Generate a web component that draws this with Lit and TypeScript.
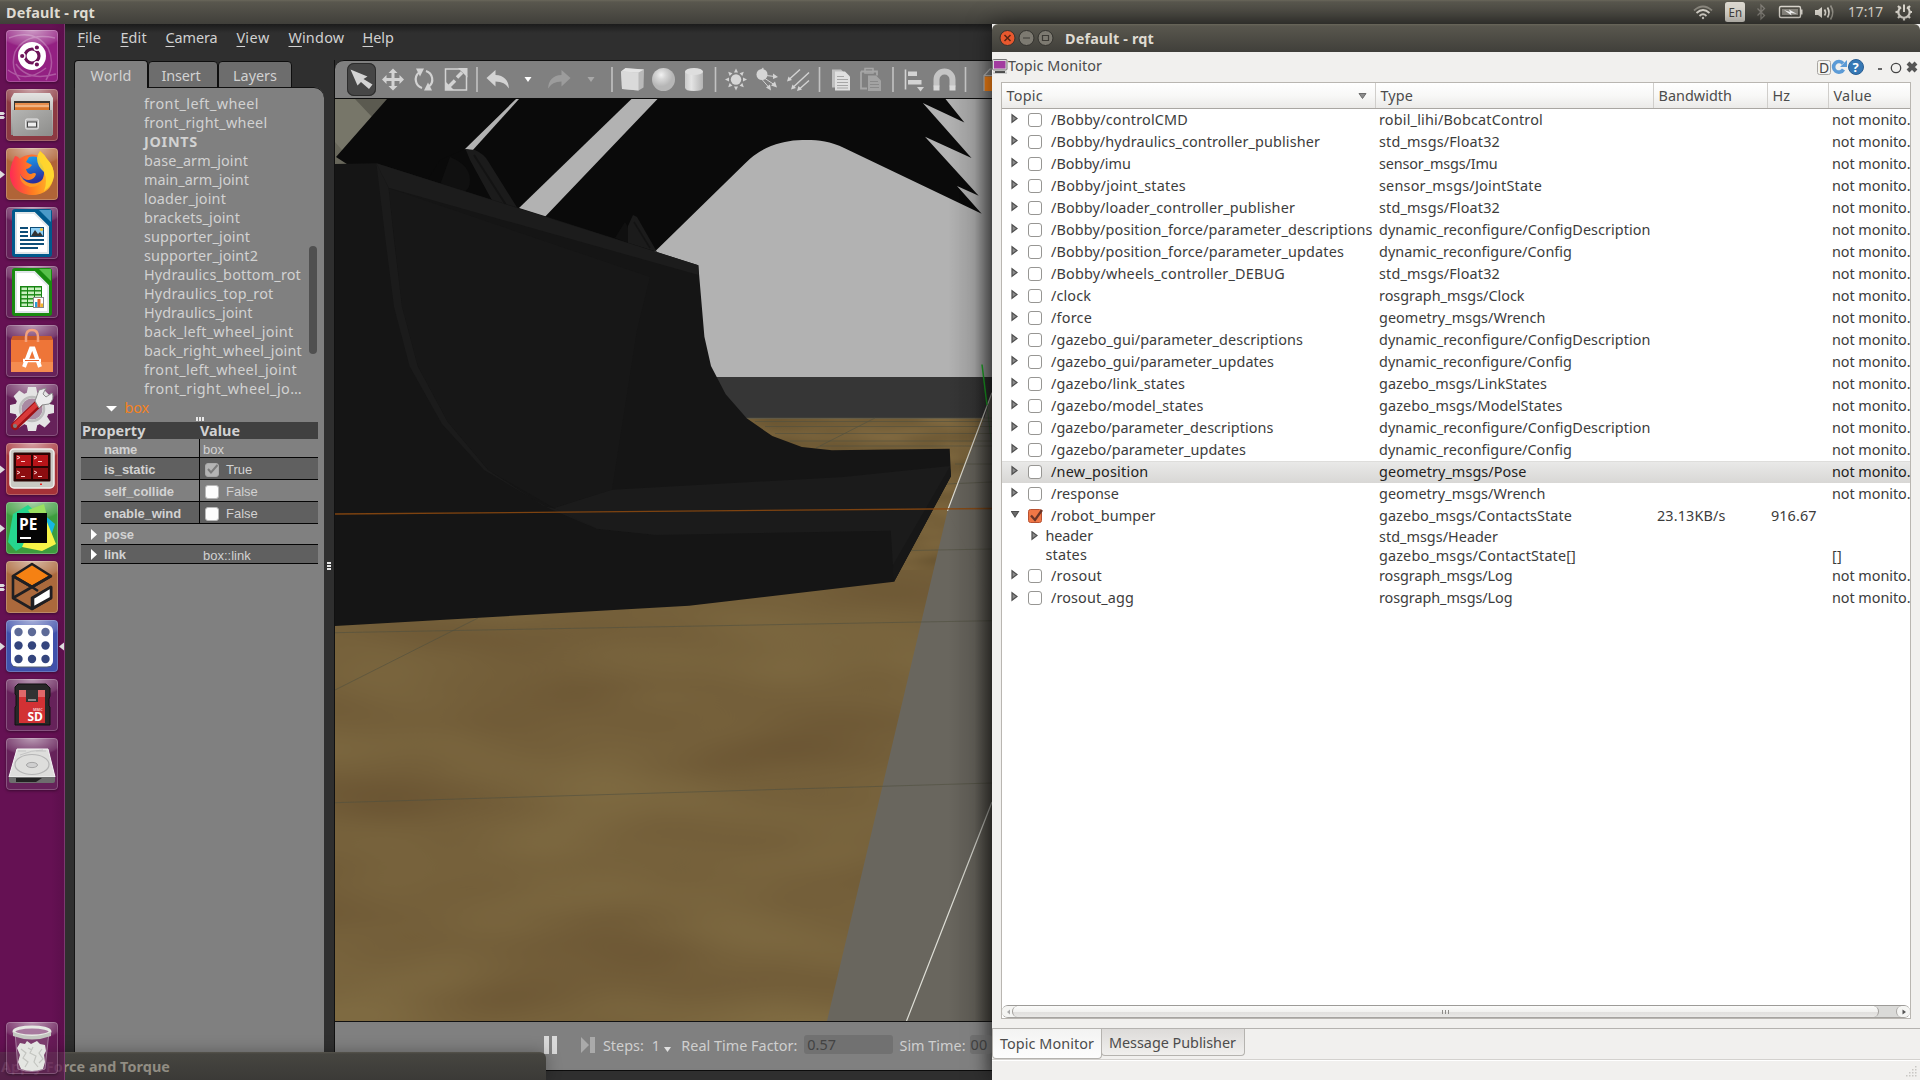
import { LitElement, html, svg, css } from "lit";
import { customElement, property } from "lit/decorators.js";

/** Text run whose tracking is adjusted so that it fills a given width. */
@customElement("fit-text")
class FitText extends LitElement {
  @property() text = "";
  @property({ type: Number }) w = 0;
  static styles = css`
    :host { display: inline-block; white-space: pre; }
  `;
  updated() {
    this.style.letterSpacing = "0px";
    const natural = this.getBoundingClientRect().width;
    if (this.w > 0 && this.text.length > 0) {
      this.style.letterSpacing = `${((this.w - natural) / this.text.length).toFixed(3)}px`;
    }
  }
  render() {
    return html`${this.text}`;
  }
}

const fit = (text: string, w: number) => html`<fit-text .text=${text} .w=${w}></fit-text>`;

type Topic = { name: string; w: number; type: string; tw: number; state?: string; bw?: string; hz?: string; value?: string; child?: boolean; arrow?: boolean };
const NM = "not monito.";
const topics: Topic[] = [
  { name: "/Bobby/controlCMD", w: 137, type: "robil_lihi/BobcatControl", tw: 164 },
  { name: "/Bobby/hydraulics_controller_publisher", w: 269, type: "std_msgs/Float32", tw: 121 },
  { name: "/Bobby/imu", w: 80, type: "sensor_msgs/Imu", tw: 118.5 },
  { name: "/Bobby/joint_states", w: 135, type: "sensor_msgs/JointState", tw: 163 },
  { name: "/Bobby/loader_controller_publisher", w: 244, type: "std_msgs/Float32", tw: 121 },
  { name: "/Bobby/position_force/parameter_descriptions", w: 321.5, type: "dynamic_reconfigure/ConfigDescription", tw: 271.5 },
  { name: "/Bobby/position_force/parameter_updates", w: 293, type: "dynamic_reconfigure/Config", tw: 193 },
  { name: "/Bobby/wheels_controller_DEBUG", w: 234, type: "std_msgs/Float32", tw: 121 },
  { name: "/clock", w: 40, type: "rosgraph_msgs/Clock", tw: 145.5 },
  { name: "/force", w: 41, type: "geometry_msgs/Wrench", tw: 166.5 },
  { name: "/gazebo_gui/parameter_descriptions", w: 252, type: "dynamic_reconfigure/ConfigDescription", tw: 271.5 },
  { name: "/gazebo_gui/parameter_updates", w: 223, type: "dynamic_reconfigure/Config", tw: 193 },
  { name: "/gazebo/link_states", w: 134, type: "gazebo_msgs/LinkStates", tw: 168 },
  { name: "/gazebo/model_states", w: 152.5, type: "gazebo_msgs/ModelStates", tw: 183.5 },
  { name: "/gazebo/parameter_descriptions", w: 222.5, type: "dynamic_reconfigure/ConfigDescription", tw: 271.5 },
  { name: "/gazebo/parameter_updates", w: 195, type: "dynamic_reconfigure/Config", tw: 193 },
  { name: "/new_position", w: 97.5, type: "geometry_msgs/Pose", tw: 147.5, state: "hover" },
  { name: "/response", w: 68, type: "geometry_msgs/Wrench", tw: 166.5 },
  { name: "/robot_bumper", w: 104.5, type: "gazebo_msgs/ContactsState", tw: 193, state: "on", bw: "23.13KB/s", hz: "916.67", value: "" },
  { name: "header", w: 47.5, type: "std_msgs/Header", tw: 119, child: true, arrow: true, value: "" },
  { name: "states", w: 41.5, type: "gazebo_msgs/ContactState[]", tw: 197, child: true, value: "[]" },
  { name: "/rosout", w: 51, type: "rosgraph_msgs/Log", tw: 133.5 },
  { name: "/rosout_agg", w: 83, type: "rosgraph_msgs/Log", tw: 133.5 },
];

const tree: [string, number][] = [
  ["front_left_wheel", 115], ["front_right_wheel", 123.5], ["JOINTS", 54], ["base_arm_joint", 104],
  ["main_arm_joint", 105], ["loader_joint", 82], ["brackets_joint", 96], ["supporter_joint", 106],
  ["supporter_joint2", 114], ["Hydraulics_bottom_rot", 157], ["Hydraulics_top_rot", 129.5],
  ["Hydraulics_joint", 108.5], ["back_left_wheel_joint", 149.5], ["back_right_wheel_joint", 158],
  ["front_left_wheel_joint", 153], ["front_right_wheel_jo…", 158],
];

const menu: [string, number, number][] = [
  ["File", 24, 43], ["Edit", 27, 45], ["Camera", 52, 71], ["View", 34, 52], ["Window", 56, 74], ["Help", 31, 40],
];

/* ---------- launcher icons, each on a 52x52 tile ---------- */
const dash = svg`<g>
  <path d="M3 8Q28 -2 42 18Q50 34 40 50M49 8Q20 2 9 22Q4 38 14 50M2 40Q20 54 40 38M50 44Q22 52 10 34" fill="none" stroke="#fff" stroke-opacity=".25" stroke-width="1.5"/>
  <circle cx="26" cy="26" r="14" fill="#fff"/><circle cx="26" cy="26" r="7" fill="none" stroke="#6d1358" stroke-width="3.2"/>
  <g stroke="#fff" stroke-width="1.4" fill="#6d1358"><circle cx="16.2" cy="26" r="2.8"/><circle cx="30.9" cy="17.5" r="2.8"/><circle cx="30.9" cy="34.5" r="2.8"/></g></g>`;
const files = svg`<g><path d="M8 4H44L47 9V46H5V9Z" fill="url(#mt)"/><rect x="8" y="12" width="36" height="12" fill="#3a3430"/>
  <rect x="9" y="14" width="34" height="8" fill="#e88d4c"/><rect x="9" y="16.500" width="34" height="1" fill="#f8d9b8"/><rect x="9" y="18.500" width="34" height="4" fill="#d9762c"/>
  <path d="M6 21H46V47H7Z" fill="url(#mt2)"/><rect x="19.500" y="30" width="13" height="10" rx="1.500" fill="#b9b9b9" stroke="#e6e6e6"/><rect x="21.500" y="33" width="9" height="5" fill="#eee" stroke="#444"/></g>`;
const firefox = svg`<g><circle cx="26" cy="26.500" r="20" fill="url(#ffo)"/><circle cx="27" cy="22" r="13.500" fill="url(#ffb)"/>
  <path d="M9 8Q12 8 14 11Q19 8 23 9L20 14L26 17Q23 21 20 21Q21 26 25 26Q29 24 30 26Q29 31 23 32Q17 32 14 26Q13 36 24 39Q36 39 38 26Q39 20 34 14Q32 8 34 3Q38 6 41 11Q48 18 48 28Q45 47 26 47Q7 46 4 29Q3 20 9 8Z" fill="url(#ffr)"/>
  <path d="M34 3Q38 6 41 11Q48 18 48 28Q46 38 38 43Q42 33 38 24Q31 18 31 10Q32 5 34 3Z" fill="#ffd930" fill-opacity=".9"/></g>`;
const sheet = (dark: string, light: string, inner: unknown) => svg`<g><path d="M9 2H43Q46 2 46 5V47Q46 50 43 50H9Q6 50 6 47V5Q6 2 9 2Z" fill=${dark}/>
  <path d="M33 3H45V15Z" fill=${light}/><path d="M9 5H29L43 19V47H9Z" fill="#dfe5e8"/><path d="M11 7H28L41 20V45H11Z" fill="#fff"/><path d="M29 5V2L46 19H43Z" fill=${dark}/>${inner}</g>`;
const writer = sheet("#00598c", "#4b9ac8", svg`<path d="M14 21H22M14 25H22M14 29H22M14 33H38M14 37H38M14 41H32" stroke="#0d4d78" stroke-width="1.800"/>
  <rect x="24.500" y="20.500" width="13" height="9" fill="#8fd0f5" stroke="#0d4d78"/><path d="M25 29L29 23L32 27L34 25L37 29Z" fill="#333"/><circle cx="35.500" cy="22.500" r="1.600" fill="#f2c63c"/>`);
const calc = sheet("#198a10", "#58c04a", svg`<rect x="14" y="20" width="22" height="21" fill="#178512"/>
  <g fill="#c9f0c0">${[21.5, 25.5, 29.5, 33.5, 37.5].map(y => svg`<rect x="15.500" y=${y} width="5.500" height="2.600"/><rect x="22" y=${y} width="6" height="2.600"/><rect x="29" y=${y} width="6" height="2.600"/>`)}</g>
  <rect x="27.500" y="31.500" width="10" height="10" fill="#fff" stroke="#888"/><path d="M29 41V36H31.500V41Z" fill="#2a9fd8"/><path d="M31.500 41V33H34.500V41Z" fill="#e0652b"/><path d="M34.500 41V37.500H37V41Z" fill="#f0b52c"/>`);
const store = svg`<g><path d="M7 11H45L47 15V47H5V15Z" fill="#ee7538"/><path d="M5 37H47V47H5Z" fill="#f58c50"/><path d="M7 11H45L47 15H5Z" fill="#c95a28"/>
  <path d="M20 17V12Q20 5 26 5Q32 5 32 12V17" fill="none" stroke="#f4a27c" stroke-width="2.500"/>
  <path d="M18 42L25 23.500H27.500L34 42" fill="none" stroke="#fff" stroke-width="4"/><path d="M17 35.500H35" stroke="#fff" stroke-width="3.500"/><path d="M19 35.500H33" stroke="#e8622c"/></g>`;
const settings = svg`<g><g fill="#e4e4e4"><circle cx="26" cy="25" r="17"/>${[0, 45, 90, 135, 180, 225, 270, 315].map(a => svg`<path d="M20.500 10L22 3H30L31.500 10Z" transform=${`rotate(${a} 26 25)`}/>`)}</g>
  <circle cx="26" cy="25" r="10.500" fill="#a98aa2"/><circle cx="26" cy="25" r="12" fill="none" stroke="#bdbdbd" stroke-width="2.500"/>
  <path d="M9 42L33 19" stroke="#9d1116" stroke-width="8" stroke-linecap="round"/><path d="M9 41L32 19" stroke="#d83a3a" stroke-width="4.500" stroke-linecap="round"/>
  <circle cx="9" cy="42" r="2" fill="#7e7e7e"/><path d="M29 17L33 6L40 4L37 10L40 13L46 9Q49 15 43 20L36 21L33 24Z" fill="#ececec" stroke="#8d8d8d"/></g>`;
const terms = svg`<g><rect x="4" y="6" width="44" height="39" rx="4" fill="#c9c9c4" stroke="#f1f1ee" stroke-width="1.500"/><rect x="7.500" y="9.500" width="37" height="29" rx="1" fill="#2b0404"/>
  <g fill="#b81419"><rect x="10" y="12" width="15" height="11"/><rect x="27" y="12" width="15" height="11"/><rect x="10" y="25" width="15" height="11" fill="#8c0d10"/><rect x="27" y="25" width="15" height="11" fill="#8c0d10"/></g>
  <g stroke="#ffd0d0" fill="none">${[[11, 13], [28, 13], [11, 28], [28, 28]].map(([x, y]) => svg`<path d=${`M${x} ${y}l3 1.500l-3 1.500M${x + 4} ${y + 5.500}h4`}/>`)}</g><rect x="34" y="40.500" width="2" height="1.500" fill="#e22"/></g>`;
const pycharm = svg`<g><path d="M7 12L22 3L30 10L24 40L10 49L2 40Z" fill="#25d58e"/><path d="M22 8L38 2L41 14L30 20Z" fill="#9be060"/><path d="M36 11L49 22L45 34L36 30Z" fill="#16b7e2"/><path d="M41 20L50 42L36 49L16 45L20 36Z" fill="#f7f347"/>
  <rect x="11" y="11" width="30" height="30" fill="#050505"/><rect x="14" y="35" width="11" height="2" fill="#fff"/><text x="13" y="28" class="pe">PE</text></g>`;
const gazebo = svg`<g stroke="#201f22" stroke-width="2.600" stroke-linejoin="round"><path d="M26 3L45 15L26 26L7 15Z" fill="#f58113"/><path d="M7 15V37L26 48L45 37V26L26 37V48M7 37L26 26L45 15M7 15L26 26L32 30" fill="none"/><path d="M27 37L45 26V37L27 47Z" fill="#fff"/></g>`;
const rqtIcon = svg`<g><rect x="5" y="5" width="42" height="42" rx="6" fill="#fff"/><path d="M6 45Q7 47 11 47H41Q45 47 46 45" fill="none" stroke="#56606e"/>
  <g fill="#34457d">${[12, 25.5, 39].map((y, j) => [12.5, 26, 39.5].map(x => svg`<circle cx=${x} cy=${y} r="4.200" fill-opacity=${j === 0 ? 0.8 : 1}/>`))}</g></g>`;
const sd = svg`<g><path d="M11 5H46V46H9V28H10V20H9V7Z" fill="none"/><path d="M17 5H45L49 9V17L48 20V27L49 28V46H14V28L15 27V16L14 15V8Z" transform="translate(-5 0)" fill="#272727" stroke="#111"/><path d="M13 11H39V44H13Z" fill="#d23134"/><path d="M13 11H39V18H13Z" fill="#e0686a"/><path d="M20 11H32V23H20Z" fill="#333"/><path d="M22 21H30" stroke="#aaa" stroke-width="1.500"/>
  <text x="27" y="31.500" class="mmc">MMC</text><text x="21.500" y="42" class="sd">SD</text></g>`;
const disk = svg`<g><path d="M11 11H42L49 39H3Z" fill="#dededc" stroke="#f6f6f6"/><ellipse cx="26" cy="26.500" rx="17" ry="10" fill="none" stroke="#b5b5b5" stroke-width="1.200"/><path d="M14 17Q26 12 37 12M12 13H20M30 13H40" fill="none" stroke="#c4c4c4"/><ellipse cx="26" cy="27" rx="5.500" ry="2.600" fill="#cfcfcf" stroke="#a5a5a5"/><path d="M3 39H49V43Q49 45 47 45H5Q3 45 3 43Z" fill="#6e6e6e"/><path d="M10 40H36L30 44H10Z" fill="#222"/></g>`;
const trash = svg`<g><path d="M9 10L12 47Q26 52 39 47L43 10" fill="#8d5a82" fill-opacity=".55" stroke="#b99bb3" stroke-opacity=".7"/>
  <path d="M11 26L14 21L19 22L21 19L25 22L31 19L34 22L39 23L40 29L38 33L39 40L37 47Q26 51 15 47L12 40L14 33Z" fill="#e4e6e2"/><path d="M15 27L20 31L17 36L22 40L19 45M27 25L24 31L30 34L28 40L32 45M36 27L33 31L37 37L33 41M22 26L26 28" fill="none" stroke="#c3c5c0" stroke-width="1.200"/>
  <ellipse cx="26" cy="9.500" rx="18" ry="4.500" fill="#a87a9f" stroke="#e6e8e3" stroke-width="3"/><path d="M7 10V14Q26 21 45 14V10Q26 18 7 10Z" fill="#c3c6c0"/></g>`;

const launcher: { bg: string; icon: unknown; run?: number; focus?: boolean }[] = [
  { bg: "#932082", icon: dash },
  { bg: "#8c3a42", icon: files, run: 2 },
  { bg: "#b06437", icon: firefox, run: 1 },
  { bg: "#66225a", icon: writer },
  { bg: "#66225a", icon: calc },
  { bg: "#66225a", icon: store },
  { bg: "#66225a", icon: settings },
  { bg: "#a53238", icon: terms, run: 1 },
  { bg: "#3d9c3e", icon: pycharm, run: 1 },
  { bg: "#ab693c", icon: gazebo, run: 2 },
  { bg: "#3f51ab", icon: rqtIcon, run: 1, focus: true },
  { bg: "#66225a", icon: sd },
  { bg: "#66225a", icon: disk },
];

/* ---------- toolbar icons, each drawn around its own centre ---------- */
const L = "#d3d3d3";
const sep = svg`<path d="M0 -12.500V12.500" stroke="#c2c2c2" stroke-width="1.600"/>`;
const down = (c: string) => svg`<path d="M-3.500 -2.500H3.500L0 2.500Z" fill=${c}/>`;
const tools: [number, unknown, string?][] = [
  [29, svg`<path d="M-11 -10L6 -3L2 -0.500L11 5L7.500 9.500L-0.500 2.500L-4 6Z" fill=${L}/>`, "sel"],
  [34, svg`<path d="M0 -11L4.500 -6.500H1.500V-1.500H6.500V-4.500L11 0L6.500 4.500V1.500H1.500V6.500H4.500L0 11L-4.500 6.500H-1.500V1.500H-6.500V4.500L-11 0L-6.500 -4.500V-1.500H-1.500V-6.500H-4.500Z" fill=${L}/>`],
  [28, svg`<path d="M-2 8.500A9 9 0 0 1 -5 -7M2 -8.500A9 9 0 0 1 5 7" fill="none" stroke=${L} stroke-width="2.200"/><path d="M-8 -11H0L-4 -3ZM8 11H0L4 3Z" fill=${L}/>`],
  [36, svg`<path d="M4 -10.500H-10.500V10.500H10.500V-4" fill="none" stroke=${L} stroke-width="1.500"/><path d="M1 -2L6 -7M-7 7L-1 1" stroke=${L} stroke-width="3.500"/><path d="M11.500 -11.500V-2L2 -11.500ZM-10.500 10.500V2L-2 10.500Z" fill=${L}/>`],
  [6, sep],
  [36, svg`<path d="M-11.500 -1.500L-2.500 -9.500V-4.500Q10 -4 11 9Q7 2 -2.500 2V7Z" fill=${L}/>`],
  [24, down("#fff")],
  [38, svg`<path d="M11.500 -1.500L2.500 -9.500V-4.500Q-10 -4 -11 9Q-7 2 2.500 2V7Z" fill="#9c9c9c"/>`],
  [26, down("#a8a8a8")],
  [16, sep],
  [25, svg`<path d="M-11.500 -8L-7 -11L11.500 -10L11 8L6 11L-10.500 9.500Z" fill="#b9b9b9"/><path d="M-11.500 -8L6 -7V11L-10.500 9.500Z" fill="#dadada"/><path d="M-11.500 -8L-7 -11.500L11.500 -10L6 -7Z" fill="#e4e4e4"/>`],
  [37, svg`<circle r="11.500" fill="url(#ball)"/>`],
  [24, svg`<path d="M-9 -8V8Q-9 11.500 0 11.500Q9 11.500 9 8V-8Z" fill="url(#cyl)"/><ellipse cy="-8" rx="9" ry="3.600" fill="#dedede"/>`],
  [19, sep],
  [22, svg`<circle r="5.200" fill="#d6d6d6"/>${[0, 45, 90, 135, 180, 225, 270, 315].map(a => svg`<path d="M0 -11L2 -7H-2Z" fill=${L} transform=${`rotate(${a})`}/>`)}`],
  [40, svg`<ellipse cx="-5" cy="-5" rx="5.500" ry="5.500" fill="#d6d6d6"/><path d="M-1 -4L8 -3M-2 -1L7 5M-5 0L2 8" stroke=${L}/><path d="M6 -6L11 -2.500L6 -0.500ZM8 2L10 8L4 6ZM3 5L4 11L-1 8ZM-6 -10L-4 -12L-3 -10Z" fill=${L}/>`],
  [22, svg`<path d="M2 -10L-9 0M11 -7L-4 7M11 1L2 9" stroke=${L} stroke-width="1.400"/><path d="M-11 2L-9.500 -3L-6 0.500ZM-7 10L-5.500 5L-2 8.500ZM-1 11.500L0.500 6.500L4 10Z" fill=${L}/>`],
  [21, sep],
  [22, svg`<path d="M-9 -10H0L3 -7V8H-9Z" fill="#c0c0c0"/><path d="M-6 -8H4L9 -3V11H-6Z" fill="#e0e0e0"/><path d="M-4 -3H3M-4 0H7M-4 3H7M-4 6H7M-4 8.500H7" stroke="#a6a6a6"/>`],
  [38, svg`<path d="M-10 -8H6V-4M-10 -8V9H-4" fill="none" stroke="#a6a6a6" stroke-width="1.800"/><rect x="-6" y="-11" width="8" height="4.500" fill="none" stroke="#a6a6a6" stroke-width="1.500"/><path d="M-3 -4H5L10 1V11.500H-3Z" fill="#a3a3a3"/><path d="M-1 2H7M-1 5H8M-1 8H8" stroke="#8a8a8a"/>`],
  [6, sep],
  [36, svg`<path d="M-8.500 -10V10" stroke=${L} stroke-width="1.600"/><path d="M-6 -8H3V-3.500H-6ZM-6 0.500H7.500V5H-6Z" fill=${L}/><path d="M3 7.500H10L6.500 12Z" fill=${L}/>`],
  [25, svg`<path d="M-8 7V0A8 8 0 0 1 8 0V7" fill="none" stroke="#c4c4c4" stroke-width="6"/><path d="M-8 11V6M8 11V6" stroke="#d9d9d9" stroke-width="6"/>`],
  [17, sep],
  [18, svg`<path d="M1 -3V11.500H16V-3Z" fill="#df7513" /><path d="M1 11.500V-4L7 -10.500H20M1 -4H14L18 -9" fill="none" stroke="#a6a6a6" stroke-width="1.200"/>`],
];

const props: { k: string; v: string; h: number; check?: boolean; arrow?: boolean; w: number }[] = [
  { k: "name", v: "box", h: 19, w: 33 },
  { k: "is_static", v: "True", h: 22, check: true, w: 51.5 },
  { k: "self_collide", v: "False", h: 22, check: false, w: 70 },
  { k: "enable_wind", v: "False", h: 22, check: false, w: 77 },
  { k: "pose", v: "", h: 21, arrow: true, w: 30 },
  { k: "link", v: "box::link", h: 19, arrow: true, w: 22 },
];

@customElement("app-root")
class AppRoot extends LitElement {
  static styles = css`
    :host { display: block; width: 1920px; height: 1080px; overflow: hidden; position: relative;
      font: 14.400px/19px "Noto Sans", "Open Sans", sans-serif; color: #3c3c3c; background: #2f2f2f; }
    * { box-sizing: border-box; }
    svg { display: block; }
    .top { height: 24px; background: linear-gradient(#6a675b 0, #59574e 2px, #403f3a); color: #dfdbd2; display: flex; align-items: center; padding: 0 8px 0 6px; }
    .bold { font-weight: 700; }
    .grow { flex: 1; }
    .desk { display: flex; height: 1056px; }

    .launcher { width: 65px; background: linear-gradient(90deg, #651153 80%, #5c0f4c); border-right: 1px solid #7d3a70; display: flex; flex-direction: column; padding: 6px 0 6px; gap: 7px; }
    .defs { position: absolute; }
    .slot { display: grid; grid-template-columns: 6px 52px 6px; align-items: center; }
    .tile { width: 52px; height: 52px; border-radius: 4px; overflow: hidden; box-shadow: inset 0 0 0 1px rgba(255,255,255,.22), 0 1px 3px rgba(0,0,0,.4);
      background-image: radial-gradient(ellipse 34px 18px at 50% 0, rgba(255,255,255,.55), rgba(255,255,255,.12) 90%, transparent); }
    .pe { font: 700 15.500px "Open Sans", sans-serif; fill: #fff; }
    .mmc { font: 700 3.800px "Open Sans", sans-serif; fill: #f3c6c6; }
    .sd { font: 700 12px "Open Sans", sans-serif; fill: #fff; }

    .gz { width: 927px; background: #2f2f2f; display: flex; flex-direction: column; color: #d2d2d2; overflow: hidden; }
    .menu { height: 36px; display: flex; padding: 4px 0 0 12.500px; background: linear-gradient(#1b1b1b, #2f2f2f 9px); flex: none; }
    .mi { display: block; white-space: pre; line-height: 20px; }
    .mi u { text-underline-offset: 3px; }
    .gbody { display: flex; flex: 1; min-height: 0; padding-left: 9px; }
    .left { width: 250px; display: flex; flex-direction: column; }
    .tabs { height: 28px; display: flex; align-items: flex-end; }
    .tab { height: 27px; border: 1px solid #0e0e0e; background: #6d6d6d; border-radius: 4px 4px 0 0; display: flex; align-items: center; justify-content: center; padding-top: 2px; }
    .tab.ins { padding-right: 4px; }
    .tab.on { height: 28px; background: #808080; border-bottom: 0; position: relative; z-index: 1; }
    .lp { flex: 1; background: #808080; border-left: 1px solid #151515; border-top-right-radius: 10px; box-shadow: inset 0 1px 0 0 #111; display: flex; flex-direction: column; margin-top: -1px; padding-top: 7px; }
    .tree { height: 323px; position: relative; }
    .ti { height: 19px; padding-left: 69px; white-space: pre; }
    .ti.sel { color: #f58220; padding-left: 29.500px; display: flex; align-items: center; gap: 7px; }
    .sb { position: absolute; right: 7px; top: 151.500px; width: 8px; height: 108px; border-radius: 4px; background: #505050; }
    .hs { height: 5px; display: flex; justify-content: center; gap: 1px; }
    .hs i { width: 2px; height: 4px; background: #e8e8e8; }
    .ptab { margin: 0 6px; }
    .ph { height: 17px; background: #404040; display: flex; line-height: 17px; font-weight: 700; }
    .ph > div:first-child { width: 119px; padding-left: 1px; }
    .pr { display: flex; border-bottom: 1px solid #050505; font: 13px/15px "Liberation Sans", Arial, sans-serif; align-items: center; }
    .pr.alt { background: #606060; }
    .pk { width: 119px; padding: 2px 0 0 10px; display: flex; align-items: center; font-weight: 700; height: 100%; border-right: 1px solid #050505; }
    .pk.open { border-color: transparent; padding-top: 0; }
    .pk svg { width: 13px; }
    .pv { padding: 2px 0 0 3px; display: flex; align-items: center; }
    .pv.chk { padding-left: 5px; gap: 7px; }
    .cb { width: 14px; height: 14px; border-radius: 3px; background: #fdfdfd; border: 1.500px solid #b8b8b8; }
    .cb.ck { background: #b4b4b4; border-color: #a9a9a9; }
    .vs { width: 10px; display: flex; flex-direction: column; gap: 1px; padding: 502px 0 0 3px; }
    .vs i { width: 4px; height: 2px; background: #e8e8e8; }
    .view { flex: 1; display: flex; flex-direction: column; min-width: 0; border-left: 1px solid #111; }
    .bar { height: 39px; flex: none; background: #808080; border-top: 1px solid #111; border-bottom: 1px solid #0c0c0c; border-radius: 9px 0 0 0; padding-left: 12px; display: flex; align-items: center; box-shadow: inset -20px 0 18px -18px rgba(0,0,0,.3); }
    .bar .t { height: 33px; }
    .bar .sel { background: #464646; border-radius: 7px; box-shadow: inset 0 0 0 1px #2c2c2c; }
    .bar .t svg { overflow: visible; }
    .scene { height: 922px; flex: none; }
    .time { height: 50px; flex: none; background: #808080; border-top: 1px solid #111; border-bottom: 1px solid #0c0c0c; display: flex; align-items: center; padding: 0 0 1px 208px; box-shadow: inset -20px 0 18px -18px rgba(0,0,0,.35); color: #cfcfcf; }
    .time svg { position: relative; top: -1px; }
    .fld { background: #717171; border-radius: 3px; height: 19px; color: #434343; padding-left: 3px; line-height: 19px; overflow: hidden; position: relative; top: -1px; }
    .fld.clip { padding-left: 0; }

    .rqt { width: 928px; background: #f1f0ee; display: flex; flex-direction: column; box-shadow: 0 0 22px rgba(0,0,0,.55); position: relative; }
    .tb { height: 28px; background: linear-gradient(#6a675b 0, #59574e 2px, #403f3a); color: #dfdbd2; display: flex; align-items: center; padding: 1px 0 0 7px; border-radius: 6px 6px 0 0; flex: none; }
    .tb svg { margin-right: 10px; position: relative; top: -1px; }
    .dock { height: 30px; display: flex; align-items: center; color: #4c4c4c; flex: none; padding-bottom: 3px; }
    .dock svg { position: relative; top: 1px; }
    .grid { margin: 0 9px; height: 937px; flex: none; border: 1px solid #b9b6b1; background: #fff; display: flex; flex-direction: column; }
    .row { display: grid; grid-template-columns: 374px 278px 114px 61px 1fr; height: 22px; align-items: center; white-space: nowrap; overflow: hidden; flex: none; }
    .row.child { height: 19px; overflow: visible; }
    .row.hover { background: linear-gradient(#d3d2cf 0, #e9e9e8 1px, #d8d7d5); color: #222; }
    .row > div { padding-left: 3px; overflow: hidden; }
    .row > div.first { padding-left: 9px; display: flex; align-items: center; }
    .row .first svg { margin-right: 8px; flex: none; }
    .row.child > div.first { padding-left: 28.500px; }
    .row .txt { padding-bottom: 1px; }
    .row.child > div, .row.child .txt { overflow: visible; line-height: 18px; padding-bottom: 1px; }
    .row.head { height: 26px; background: linear-gradient(#fff, #f8f8f7 50%, #ebeae8); border-bottom: 1px solid #a9a6a2; color: #4c4c4c; }
    .head > div { border-right: 1px solid #d0cecb; height: 25px; display: flex; align-items: center; padding-left: 4.500px; }
    .head > div:last-child { border-right: 0; }
    .hsb { height: 13px; display: flex; border-radius: 6px; border-top: 1px solid #9d9b98; background: #dadad8; border-bottom: 1px solid #a5a3a0; }
    .hsb .thumb { width: 867px; margin-left: -4px; border: 1px solid #a19f9b; border-width: 0 1px; border-radius: 6px; background: linear-gradient(#fbfbfa, #f2f2f0 50%, #e0dfdd 60%, #e9e8e6); display: flex; align-items: center; justify-content: center; gap: 2px; }
    .thumb i { width: 1px; height: 4px; background: #8d8b88; }
    .btn { width: 14px; background: #f5f5f3; display: flex; align-items: center; justify-content: center; border-radius: 6px 0 0 6px; }
    .btn.r { border-left: 1px solid #a9a7a4; border-radius: 6px; }
    .dtabs { margin-top: 9px; height: 32px; border-top: 1px solid #b5b3b0; border-bottom: 1px solid #d3d1ce; display: flex; flex: none; color: #4c4c4c; }
    .dtab { height: 27px; border: 1px solid #b5b3af; border-top: 0; border-radius: 0 0 4px 4px; padding: 4px 0 0 7px; background: linear-gradient(#dddbd9, #f0efed); margin-left: -1px; }
    .dtab.on { height: 30px; background: linear-gradient(#f3f3f2, #fdfdfd); margin-left: 0; padding-top: 5px; }
    .status { flex: 1; display: flex; justify-content: flex-end; align-items: flex-end; padding: 2px; border-top: 1px solid #fff; }

    .ghost { position: absolute; left: 0; top: 1052px; width: 546px; height: 28px; border-radius: 0 6px 0 0; background: linear-gradient(#55534b 0, #464540 2px, #3b3a37); color: #918d83; padding: 5px 0 0 1px; box-shadow: 0 0 16px rgba(0,0,0,.3); }
    .veil { position: absolute; left: 0; top: 1052px; width: 65px; height: 28px; background: rgba(94,22,78,.7); border-right: 1px solid #7d3a70; }
    .trash { position: absolute; left: 6px; top: 1022px; background-color: rgba(112,46,98,.35); }
  `;

  private tool([w, g, cls]: [number, unknown, string?]) {
    return html`<div class="t ${cls ?? ""}"><svg width=${w} height="33" viewBox="${-w / 2} -16.5 ${w} 33">${g}</svg></div>`;
  }

  private tile(t: { bg: string; icon: unknown; run?: number; focus?: boolean }) {
    return html`<div class="slot">
      <svg width="6" height="14" viewBox="0 0 6 14">${t.run === 1 ? svg`<path d="M0 3.500L5 7.500L0 11.500Z" fill="#ddd"/>` : t.run === 2 ? svg`<path d="M0 4H3.500L5 5.500L3.500 7H0ZM0 8H3.500L5 9.500L3.500 11H0Z" fill="#ddd"/>` : ""}</svg>
      <div class="tile" style="background-color:${t.bg}"><svg width="52" height="52">${t.icon}</svg></div>
      <svg width="6" height="14" viewBox="0 0 6 14">${t.focus ? svg`<path d="M6 3.500L1 7.500L6 11.500Z" fill="#ddd"/>` : ""}</svg>
    </div>`;
  }

  private topicRow(t: Topic) {
    const tri = svg`<path d="M1 .8V8.200L6 4.500Z" fill="#8c8c8c" stroke="#4e4e4e" stroke-width="1.200"/>`;
    return html`<div class="row ${t.child ? "child" : ""} ${t.state ?? ""}">
      <div class="first">
        ${t.child
          ? html`<svg width="7" height="11" viewBox="0 0 7 11">${t.arrow ? tri : ""}</svg>`
          : html`<svg width="32" height="18" viewBox="0 0 32 18">
              ${t.state === "on"
                ? svg`<path d="M.5 4.500H7.500L4 10Z" fill="#6c6c6c" stroke="#4e4e4e" stroke-width="1.100"/>
                    <rect x="17.500" y="2.500" width="13" height="13" rx="2" fill="#f07746" stroke="#b85131"/><path d="M20 8.500L24 13L31 3" fill="none" stroke="#6b3527" stroke-width="2.300"/>`
                : svg`<g transform="translate(0 3)">${tri}</g><rect x="17.500" y="2.500" width="13" height="13" rx="2.500" fill="#fff" stroke="#979693"/>`}
            </svg>`}
        <span class="txt">${fit(t.name, t.w)}</span>
      </div>
      <div class="txt">${fit(t.type, t.tw)}</div>
      <div class="txt">${t.bw ? fit(t.bw, 68.5) : ""}</div>
      <div class="txt">${t.hz ? fit(t.hz, 45.5) : ""}</div>
      <div class="txt">${(t.value ?? NM) ? fit(t.value ?? NM, t.value ? 10 : 78.5) : ""}</div>
    </div>`;
  }

  private scene() {
    return html`<svg class="scene" width="657" height="922" viewBox="335 99 657 922">
      <defs>
        <filter id="wood" x="0" y="0" width="100%" height="100%" color-interpolation-filters="sRGB"><feTurbulence type="fractalNoise" baseFrequency=".0045 .013" numOctaves="2" seed="7"/>
          <feColorMatrix values=".11 0 0 0 .405  .12 0 0 0 .318  .08 0 0 0 .19  0 0 0 0 1"/></filter>
        <filter id="wood2" x="0" y="0" width="100%" height="100%" color-interpolation-filters="sRGB"><feTurbulence type="fractalNoise" baseFrequency=".012 .05" numOctaves="2" seed="3"/>
          <feColorMatrix values=".16 0 0 0 .375  .14 0 0 0 .3  .1 0 0 0 .17  0 0 0 0 1"/></filter>
        <clipPath id="floor"><path d="M335 418.500H984L947.500 511L827 1021H335Z"/></clipPath>
        <linearGradient id="shade"><stop offset="0" stop-opacity="0"/><stop offset=".6" stop-opacity=".12"/><stop offset="1" stop-opacity=".45"/></linearGradient>
      </defs>
      <rect x="335" y="99" width="657" height="279" fill="#b2b2b2"/>
      <rect x="335" y="377" width="657" height="42" fill="#363636"/>
      <rect x="335" y="418" width="657" height="603" fill="#69665e"/>
      <g clip-path="url(#floor)"><rect x="335" y="570" width="657" height="451" filter="url(#wood)"/><rect x="335" y="418" width="657" height="152" filter="url(#wood2)"/></g>
      <path d="M984 419L992 393V600L947.500 511Z" fill="#69665e"/>
      <g stroke="#50503f" stroke-opacity=".6" fill="none">
        <path d="M335 802.700L992 783M335 632.700L992 620.700M910 550.500L992 549M946 484L992 482M820 446H992M335 690L478 618M816 448L875 418M790 441H992M775 433.500H992M765 426.500H992M755 421.500H992M745 418H992M955 464H992"/></g>
      <path d="M992 392.700L947.500 510.700M992 802L906.500 1021" stroke="#deded6" stroke-width="1.200" fill="none"/>
      <path d="M982 364.500L987 405" stroke="#1fc02a" stroke-width="1.500"/><path d="M987 405L991 440" stroke="#2f6a35" stroke-opacity=".5"/>
      <path d="M335 99H390L345 165H335Z" fill="#777669"/><path d="M355 99H390L372 117Z" fill="#5b5a50"/><path d="M335 142L342 150L348 166H335Z" fill="#68675b"/>
      <path d="M387 99H516L465 149L440 200L350 166L336 157Z" fill="#0a0a0a"/>
      <path d="M519 99H631.500L519 208L500 215L440 190L472 151Z" fill="#0a0a0a"/>
      <path d="M465 149L472 150.500L512 216L420 192L440 160Z" fill="#0a0a0a"/>
      <path d="M657.500 99H945.500L964.400 122.500L922.800 103L971.500 158L925 136.700L978.700 195.700L957 186L981.700 213.700L844.700 148.300C830 141 819 140 807 140C793 140 785 141 771 146Q756 152 745 163.500L656.500 250L640 258L540 222Z" fill="#0a0a0a"/>
      <path d="M450 157Q470 165 470 180Q470 190 463 192L440 185ZM625 222Q632 232 628 243L615 238Z" fill="#101010"/>
      <path d="M465.500 149L475 150Q484 154 488 161L518 209L500 215L470 160Z" fill="#1b1b1b"/><path d="M474 155L506 205" stroke="#131313" stroke-width="2"/>
      <path d="M633 215L637 217L657 252L628 243V226Z" fill="#1b1b1b"/><path d="M634 222L650 248" stroke="#131313" stroke-width="1.500"/>
      <path d="M335 164L376.400 163.300L551 218L657 252L698.300 265.300L704.400 336.700L711 366L725.700 394.300L746.700 418.300L772.300 436L801.800 447L832 450.300L949.700 448.700L951 476L894 581.700L689 605.700L335 626Z" fill="#151515"/>
      <path d="M388.500 188L650 277L637 330L612 490L554 508L488 470L447.500 421.700L417.600 366L402 306.700Z" fill="#171717"/>
      <path d="M376.400 163.300L698.300 265.300L698.700 275L388.500 187.700Z" fill="#1c1c1c"/>
      <path d="M376.400 163.300L385.500 240L394 306.700L409.500 366L442 424L484 470L550 509L597 528.700L657 535L657 530L556 509L543.700 506L488 470L447.500 421.700L417.600 366L402 306.700L394 240L388.500 187.700Z" fill="#1b1b1b"/>
      <path d="M554 508L612 489.700L843 477L949.700 466L951 476L894 581.700L890.700 530.700L657 535L597 528.700Z" fill="#1b1b1b"/>
      <path d="M949.700 467L893 565L894 581.700L951 476Z" fill="#171717"/>
      <path d="M335 514L992 508.500" stroke="#8a480f" stroke-opacity=".9" stroke-width="1.300"/>
      <rect x="948" y="99" width="44" height="922" fill="url(#shade)"/>
    </svg>`;
  }

  render() {
    return html`
      <div class="top">
        <span class="bold">${fit("Default - rqt", 89)}</span><span class="grow"></span>
        <svg width="222" height="24" viewBox="1690 0 222 24" fill="none" stroke="#dfdbd2">
          <path d="M1694 10.500Q1703 2.500 1712 10.500" stroke="#8e8b82" stroke-width="1.700"/><path d="M1696.500 13Q1703 7 1709.500 13M1699.500 16Q1703 12.500 1706.500 16" stroke-width="1.800"/><circle cx="1703" cy="18" r="1.200" fill="#dfdbd2" stroke="none"/>
          <rect x="1725" y="2" width="20" height="20" rx="2.500" fill="#dfdbd2" stroke="none"/>
          <text x="1728.500" y="17" fill="#454440" stroke="none" font-size="13" textLength="13.500" lengthAdjust="spacingAndGlyphs">En</text>
          <path d="M1757.500 8.500L1764.500 15.500L1761 19V5L1764.500 8.500L1757.500 15.500" stroke="#84817a" stroke-width="1.300"/>
          <rect x="1779.500" y="6.500" width="21" height="11" rx="1.500" stroke-width="1.400"/><rect x="1782" y="9" width="16" height="6" fill="#8f8c84" stroke="none"/><path d="M1801.500 9.500V14.500" stroke-width="2"/><path d="M1784 10L1790 12L1789 9.500L1797 14L1791 13L1791.500 15.500Z" fill="#fff" stroke="none"/>
          <path d="M1815 10H1818L1822 7V18L1818 15H1815Z" fill="#dfdbd2" stroke="none"/><path d="M1824.500 9.500Q1826.500 12.500 1824.500 15.500M1827.500 7.500Q1830.500 12.500 1827.500 17.500" stroke-width="1.700"/><path d="M1830.500 5.500Q1835 12.500 1830.500 19.500" stroke="#98958c" stroke-width="1.600"/>
          <text x="1848" y="17" fill="#dfdbd2" stroke="none" font-size="14" textLength="35" lengthAdjust="spacingAndGlyphs">17:17</text>
          <g transform="translate(1904 12)"><path d="M-3 -4.800A5.700 5.700 0 1 0 3 -4.800" stroke-width="2.200"/><path d="M0 -7.500V0" stroke-width="2"/>${[45, 90, 135, 180, 225, 270, 315].map(a => svg`<path d="M0 -6V-8.500" stroke-width="2.200" transform=${`rotate(${a})`}/>`)}</g>
        </svg>
      </div>
      <div class="desk">
        <div class="launcher">
          <svg class="defs" width="0" height="0"><defs>
            <linearGradient id="mt" x2="0" y2="1"><stop stop-color="#e4e4e2"/><stop offset="1" stop-color="#8f8f8d"/></linearGradient>
            <linearGradient id="mt2" x2="1" y2="1"><stop stop-color="#b5b5b3"/><stop offset="1" stop-color="#8d8d8b"/></linearGradient>
            <linearGradient id="ffo" x2=".8" y2="1"><stop stop-color="#ff5a36"/><stop offset="1" stop-color="#ffb21e"/></linearGradient>
            <linearGradient id="ffb" x2=".3" y2="1"><stop stop-color="#18a8f5"/><stop offset="1" stop-color="#2a2f9e"/></linearGradient>
            <linearGradient id="ffr" x1="0" y1=".5" x2="1" y2=".4"><stop stop-color="#ff2a55"/><stop offset=".45" stop-color="#ff7a22"/><stop offset="1" stop-color="#ffc928"/></linearGradient>
          </defs></svg>
          ${launcher.map(t => this.tile(t))}
        </div>
        <div class="gz">
          <div class="menu">${menu.map(([t, w, s]) => html`<div style="width:${s}px"><span class="mi"><u>${t[0]}</u>${fit(t.slice(1), w - (({ F: 8, E: 8.5, C: 9, V: 9, W: 13.5, H: 10.5 } as Record<string, number>)[t[0]]))}</span></div>`)}</div>
          <div class="gbody">
            <div class="left">
              <div class="tabs">
                <div class="tab on" style="width:74px">${fit("World", 41)}</div>
                <div class="tab ins" style="width:70px">${fit("Insert", 39)}</div>
                <div class="tab" style="width:74px">${fit("Layers", 44)}</div>
              </div>
              <div class="lp">
                <div class="tree">
                  ${tree.map(([t, w]) => html`<div class="ti ${t === "JOINTS" ? "bold" : ""}">${fit(t, w)}</div>`)}
                  <div class="ti sel"><svg width="13" height="8"><path d="M1 2H12L6.500 7.500Z" fill="#fff"/></svg>${fit("box", 24.5)}</div>
                  <div class="sb"></div>
                </div>
                <div class="hs"><i></i><i></i><i></i></div>
                <div class="ptab">
                  <div class="ph"><div>${fit("Property", 63.5)}</div><div>${fit("Value", 40)}</div></div>
                  <div>${props.map((p, i) => html`<div class="pr ${i % 2 ? "alt" : ""}" style="height:${p.h}px">
                    <div class="pk ${p.arrow ? "open" : ""}"><svg width="13" height="13">${p.arrow ? svg`<path d="M0 1L6 6.500L0 12Z" fill="#fff"/>` : ""}</svg>${fit(p.k, p.w)}</div>
                    ${p.check !== undefined
                      ? html`<div class="pv chk"><div class="cb ${p.check ? "ck" : ""}">${p.check ? html`<svg width="13" height="12"><path d="M2 5L5 8.500L11.500 1" fill="none" stroke="#7a7a7a" stroke-width="2"/></svg>` : ""}</div>${p.v}</div>`
                      : html`<div class="pv">${p.v}</div>`}
                  </div>`)}</div>
                </div>
              </div>
            </div>
            <div class="vs"><i></i><i></i><i></i></div>
            <div class="view">
              <svg class="defs" width="0" height="0"><defs>
                <radialGradient id="ball" cx=".4" cy=".3"><stop stop-color="#f2f2f2"/><stop offset=".4" stop-color="#d6d6d6"/><stop offset="1" stop-color="#b6b6b6"/></radialGradient>
                <linearGradient id="cyl"><stop stop-color="#c9c9c9"/><stop offset=".35" stop-color="#e4e4e4"/><stop offset="1" stop-color="#b4b4b4"/></linearGradient></defs></svg>
              <div class="bar">${tools.map(t => this.tool(t))}</div>
              ${this.scene()}
              <div class="time">
                <svg width="61" height="18"><path d="M1 0H6V18H1ZM9 0H14V18H9Z" fill="#d9d9d9"/><path d="M38 1L46 9L38 17ZM47 1H52V17H47Z" fill="#aaa"/></svg>
                ${fit("Steps:", 41)}<span style="width:8px"></span>${fit("1", 9)}
                <svg width="21" height="18"><path d="M3 11H10L6.500 16Z" fill="#e0e0e0"/></svg>
                ${fit("Real Time Factor:", 116)}<span style="width:7px"></span>
                <div class="fld" style="width:90px">${fit("0.57", 29)}</div><span style="width:7px"></span>
                ${fit("Sim Time:", 66)}<span style="width:5px"></span>
                <div class="fld clip" style="width:22px">${fit("00", 17)}</div>
              </div>
            </div>
          </div>
        </div>
        <div class="rqt">
          <div class="tb">
            <svg width="56" height="24" viewBox="0 0 56 24" fill="none"><g stroke="#33322e"><circle cx="8.500" cy="12" r="7.500" fill="#e8582e"/><circle cx="27.500" cy="12" r="7.500" fill="#7d7a71"/><circle cx="46.500" cy="12" r="7.500" fill="#7d7a71"/></g>
              <path d="M5.500 9L11.500 15M11.500 9L5.500 15" stroke="#5a2412" stroke-width="1.500"/><path d="M24 12H31M43.500 9.500H49.500V14.500H43.500Z" stroke="#3d3b36" stroke-width="1.200"/></svg>
            <span class="bold">${fit("Default - rqt", 89)}</span>
          </div>
          <div class="dock">
            <svg width="16" height="18" viewBox="0 0 16 18"><rect x=".5" y="1.500" width="14.500" height="10.500" rx="1" fill="#d8d8d8" stroke="#777"/><rect x="2" y="3" width="11.500" height="7.500" fill="#a23ba0"/><path d="M1 13.500H15V16H1Z" fill="#ccc"/><path d="M3 14H13" stroke="#222" stroke-width="1.500"/></svg>
            ${fit("Topic Monitor", 94)}<span class="grow"></span>
            <svg width="106" height="22" viewBox="1814 54 106 22"><rect x="1817.500" y="58.500" width="13" height="14" rx="2" fill="#f4f3f1" stroke="#a9a6a2"/><text x="1819" y="71" font-size="14" fill="#444">D</text>
              <path d="M1843.500 67.500A5.300 5.300 0 1 1 1843 61.500" fill="none" stroke="#5c9bd6" stroke-width="3.600"/><path d="M1847 58V65H1840Z" fill="#5c9bd6"/>
              <circle cx="1856" cy="65" r="7.500" fill="#3678b5" stroke="#2b5f93"/><text x="1852.500" y="70" font-size="13" font-weight="700" fill="#fff">?</text>
              <path d="M1878 67H1882" stroke="#444" stroke-width="1.600"/><circle cx="1896" cy="66" r="4.700" fill="none" stroke="#444" stroke-width="1.300"/>
              <path d="M1908 61L1916 69M1916 61L1908 69" stroke="#555" stroke-width="4"/></svg>
          </div>
          <div class="grid">
            <div class="row head">
              <div>${fit("Topic", 36.5)}<span class="grow"></span><svg width="19" height="8"><path d="M3 1.500H10L6.500 6.500Z" fill="#8c8c8c" stroke="#6d6d6d"/></svg></div>
              <div>${fit("Type", 32.5)}</div><div>${fit("Bandwidth", 73.5)}</div><div>${fit("Hz", 17.5)}</div><div>${fit("Value", 38.5)}</div>
            </div>
            ${topics.map(t => this.topicRow(t))}
            <div class="grow"></div>
            <div class="hsb"><div class="btn"><svg width="6" height="6"><path d="M4 .5V5.500L1 3Z" fill="#aaa"/></svg></div>
              <div class="thumb"><i></i><i></i><i></i></div><span class="grow"></span>
              <div class="btn r"><svg width="6" height="6"><path d="M1.500 .5V5.500L5 3Z" fill="#555"/></svg></div></div>
          </div>
          <div class="dtabs"><div class="dtab on" style="width:110px">${fit("Topic Monitor", 94)}</div><div class="dtab" style="width:144px">${fit("Message Publisher", 127)}</div></div>
          <div class="status"><svg width="12" height="12" fill="#c9c7c4">${[0, 1, 2, 3].map(i => [0, 1, 2, 3].filter(j => i + j >= 3).map(j => svg`<rect x=${i * 3} y=${j * 3} width="1.500" height="1.500"/>`))}</svg></div>
        </div>
      </div>
      <div class="ghost bold">${fit("Apply Force and Torque", 169)}</div>
      <div class="veil"></div>
      <div class="tile trash"><svg width="52" height="52">${trash}</svg></div>
    `;
  }
}
